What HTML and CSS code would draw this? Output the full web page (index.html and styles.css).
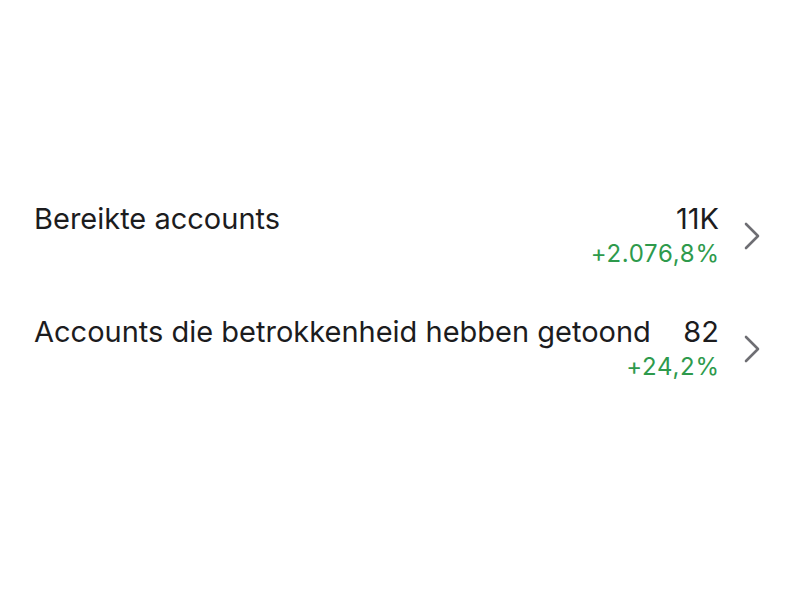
FILE: index.html
```html
<!DOCTYPE html>
<html lang="nl">
<head>
<meta charset="utf-8">
<link rel="stylesheet" href="styles.css">
</head>
<body>
<ul class="list">
  <li class="row">
    <div class="main">
      <div class="line">
        <span class="title">Bereikte accounts</span>
        <span class="value">11K</span>
      </div>
      <span class="change">+2.076,8%</span>
    </div>
    <svg class="chev" width="16" height="28" viewBox="0 0 16 28"><path d="M2 2 L14 14 L2 26" fill="none" stroke="#6e6e73" stroke-width="2.6" stroke-linecap="round" stroke-linejoin="round"/></svg>
  </li>
  <li class="row">
    <div class="main">
      <div class="line">
        <span class="title">Accounts die betrokkenheid hebben getoond</span>
        <span class="value">82</span>
      </div>
      <span class="change">+24,2%</span>
    </div>
    <svg class="chev" width="16" height="28" viewBox="0 0 16 28"><path d="M2 2 L14 14 L2 26" fill="none" stroke="#6e6e73" stroke-width="2.6" stroke-linecap="round" stroke-linejoin="round"/></svg>
  </li>
</ul>
</body>
</html>
```
FILE: styles.css
```css
html, body {
  margin: 0;
  padding: 0;
  background: #ffffff;
}
body {
  width: 800px;
  height: 600px;
  font-family: Inter, "Noto Sans", sans-serif;
  color: #1c1c1e;
}
.list {
  list-style: none;
  margin: 0;
  padding: 201px 0 0 34px;
  display: flex;
  flex-direction: column;
  gap: 43px;
}
.row {
  display: flex;
  align-items: flex-start;
  height: 70px;
}
.main {
  flex: 1;
  display: flex;
  flex-direction: column;
}
.line {
  display: flex;
  justify-content: space-between;
  gap: 24px;
  font-size: 29px;
  line-height: 36px;
  white-space: nowrap;
}
.change {
  align-self: flex-end;
  font-size: 24px;
  line-height: 34px;
  letter-spacing: 0.7px;
  margin-right: -0.7px;
  color: #2e9a4c;
}
.chev {
  margin: 21px 40px 0 25px;
}
```
